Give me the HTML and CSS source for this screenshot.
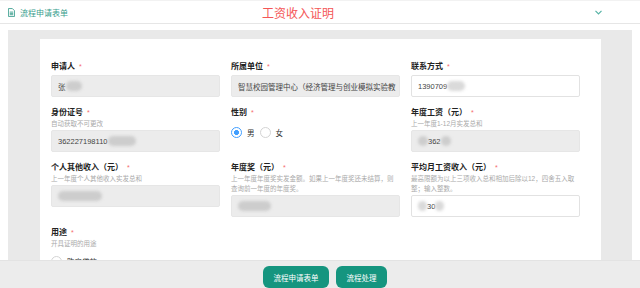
FILE: index.html
```html
<!DOCTYPE html>
<html lang="zh-CN">
<head>
  <meta charset="UTF-8" />
  <meta name="viewport" content="width=device-width, initial-scale=1.0" />
  <title>工资收入证明</title>
  <link rel="stylesheet" href="styles.css">
</head>
<body>
  <div class="top-bar">
    <div class="crumb">
      <svg viewBox="0 0 8 10" fill="none" stroke="#3a9e8e" stroke-width="1">
        <path d="M0.5 0.5h4.5l2.5 2.5v6.5h-7z" />
        <path d="M2 4.5h4M2 6h4M2 7.5h4" />
      </svg>
      <span>流程申请表单</span>
    </div>
    <h1 class="title">工资收入证明</h1>
    <svg class="chevron" viewBox="0 0 7 5" fill="none" stroke="#56b3a5" stroke-width="1.2">
      <polyline points="0.5,0.8 3.5,3.8 6.5,0.8" />
    </svg>
  </div>

  <div class="main">
    <div class="panel">
      <div class="sheet">
        <div class="form">
          <div class="field">
            <div class="label">申请人<i>*</i></div>
            <div class="input off">张<span class="blur b16"></span></div>
          </div>
          <div class="field">
            <div class="label">所属单位<i>*</i></div>
            <div class="input off"><span class="clip">智慧校园管理中心（经济管理与创业模拟实验教</span></div>
          </div>
          <div class="field">
            <div class="label">联系方式<i>*</i></div>
            <div class="input">1390709<span class="blur b18 light"></span></div>
          </div>

          <div class="field">
            <div class="label">身份证号<i>*</i></div>
            <div class="hint">自动获取不可更改</div>
            <div class="input off">362227198110<span class="blur b28"></span></div>
          </div>
          <div class="field">
            <div class="label">性别<i>*</i></div>
            <div class="radios">
              <label class="radio"><span class="dot on"></span>男</label>
              <label class="radio"><span class="dot"></span>女</label>
            </div>
          </div>
          <div class="field">
            <div class="label">年度工资（元）<i>*</i></div>
            <div class="hint">上一年度1-12月实发总和</div>
            <div class="input off"><span class="blur b10"></span>362<span class="blur b10"></span></div>
          </div>

          <div class="field">
            <div class="label">个人其他收入（元）<i>*</i></div>
            <div class="hint">上一年度个人其他收入实发总和</div>
            <div class="input off"><span class="blur b44"></span></div>
          </div>
          <div class="field">
            <div class="label">年度奖（元）<i>*</i></div>
            <div class="hint">上一年度年度奖实发金额。如果上一年度奖还未结算，则<br>查询前一年度的年度奖。</div>
            <div class="input off"><span class="blur b33"></span></div>
          </div>
          <div class="field">
            <div class="label">平均月工资收入（元）<i>*</i></div>
            <div class="hint">最高限额为以上三项收入总和相加后除以12，四舍五入取<br>整；输入整数。</div>
            <div class="input"><span class="blur b9 light"></span>30<span class="blur b9 light"></span></div>
          </div>

          <div class="field">
            <div class="label">用途<i>*</i></div>
            <div class="hint">开具证明的用途</div>
            <div class="radios">
              <label class="radio"><span class="dot"></span>购房贷款</label>
            </div>
          </div>
        </div>
      </div>
    </div>
  </div>

  <div class="actions">
    <button class="btn">流程申请表单</button>
    <button class="btn">流程处理</button>
  </div>
</body>
</html>
```

FILE: styles.css
```css
* {
  margin: 0;
  padding: 0;
  box-sizing: border-box;
}

body {
  font-family: "Liberation Sans", "Noto Sans CJK SC", sans-serif;
  background: #fff;
  color: #333;
  height: 288px;
  overflow: hidden;
}

/* header */
.top-bar {
  height: 24px;
  border-top: 1px solid #f2f2f2;
  border-bottom: 1px solid #e6e6e6;
  display: flex;
  align-items: center;
}

.crumb {
  display: flex;
  align-items: center;
  gap: 5px;
  padding-left: 8px;
  font-size: 8px;
  color: #3a9e8e;
}

.crumb svg {
  width: 7px;
  height: 9px;
}

.title {
  margin-left: 194px;
  font-size: 12px;
  font-weight: normal;
  color: #f45656;
}

.chevron {
  margin-left: auto;
  margin-right: 38px;
  width: 7px;
  height: 5px;
}

/* content */
.main {
  padding: 6px 8px 0;
}

.panel {
  background: #e9e9e9;
  padding: 9px 31px 0 32px;
  height: 258px;
  overflow: hidden;
}

.sheet {
  background: #fff;
  padding: 22px 21px 40px 11px;
}

.form {
  display: grid;
  grid-template-columns: repeat(3, 169px);
  column-gap: 11px;
  row-gap: 10px;
  align-items: start;
}

.label {
  font-size: 8px;
  font-weight: bold;
  line-height: 12px;
  margin-bottom: 2px;
  color: #222;
}

.label i {
  font-style: normal;
  font-weight: normal;
  font-size: 7px;
  color: #f56c6c;
  margin-left: 4px;
  vertical-align: top;
}

.hint {
  font-size: 6.5px;
  line-height: 10px;
  color: #aaa;
  margin-top: -2px;
  margin-bottom: 1px;
  white-space: nowrap;
}

.input {
  height: 22px;
  border: 1px solid #e2e2e2;
  border-radius: 2px;
  padding-left: 6px;
  background: #fff;
  font-size: 7.5px;
  color: #444;
  display: flex;
  align-items: center;
  white-space: nowrap;
  overflow: hidden;
}

.input.off {
  background: #ececec;
  border-color: #e6e6e6;
}

.clip {
  overflow: hidden;
  min-width: 0;
}

.blur {
  display: inline-block;
  height: 10px;
  border-radius: 5px;
  background: #cdcdcd;
  filter: blur(1.5px);
}

.blur.light { background: #dadada; }
.b9 { width: 9px; }
.b10 { width: 10px; }
.b16 { width: 16px; }
.b18 { width: 18px; }
.b28 { width: 28px; }
.b33 { width: 33px; }
.b44 { width: 44px; }

.radios {
  height: 22px;
  display: flex;
  align-items: center;
  font-size: 7.5px;
  color: #333;
}

.radio {
  display: flex;
  align-items: center;
  gap: 5px;
  margin-right: 5px;
}

.dot {
  width: 11px;
  height: 11px;
  border: 1px solid #d4d4d4;
  border-radius: 50%;
  background: #fff;
}

.dot.on {
  border-color: #409eff;
  background: radial-gradient(circle, #409eff 2.2px, #fff 2.8px);
}

/* footer buttons */
.actions {
  position: fixed;
  left: 0;
  right: 0;
  bottom: 0;
  height: 28px;
  background: #ececec;
  border-top: 1px solid #e3e3e3;
  display: flex;
  justify-content: center;
  gap: 7px;
  padding: 5px 0 0 10px;
}

.btn {
  height: 22px;
  padding: 0 10.5px;
  border: none;
  border-radius: 6px;
  background: #15957f;
  color: #fff;
  font-family: inherit;
  font-size: 7.5px;
  cursor: pointer;
}
```
